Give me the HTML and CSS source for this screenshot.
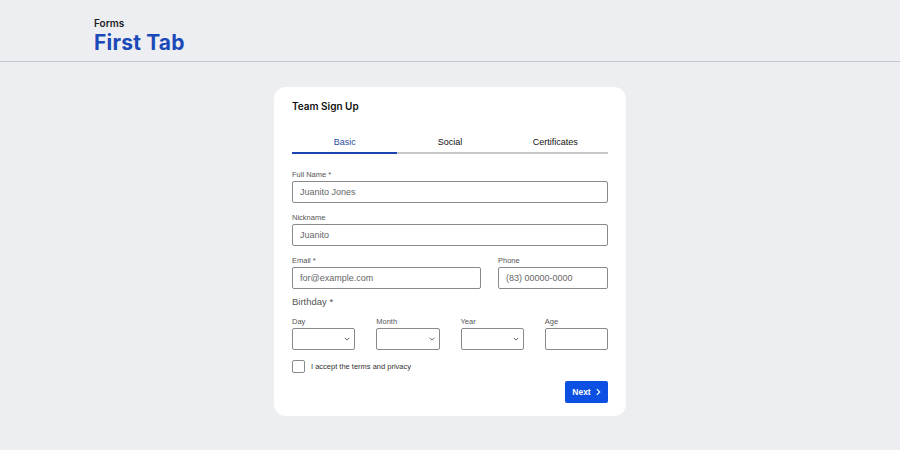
FILE: index.html
```html
<!DOCTYPE html>
<html>
<head>
<meta charset="utf-8">
<link rel="stylesheet" href="styles.css">
</head>
<body>
<header class="page-header">
  <div class="crumb">Forms</div>
  <h1 class="page-title">First Tab</h1>
</header>
<main class="main">
  <section class="card">
    <h2 class="card-title">Team Sign Up</h2>
    <nav class="tabs">
      <div class="tab active">Basic</div>
      <div class="tab">Social</div>
      <div class="tab">Certificates</div>
    </nav>
    <div class="field">
      <label class="label">Full Name *</label>
      <input class="input" placeholder="Juanito Jones">
    </div>
    <div class="field">
      <label class="label">Nickname</label>
      <input class="input" placeholder="Juanito">
    </div>
    <div class="row-2">
      <div class="field">
        <label class="label">Email *</label>
        <input class="input" placeholder="for@example.com">
      </div>
      <div class="field">
        <label class="label">Phone</label>
        <input class="input" placeholder="(83) 00000-0000">
      </div>
    </div>
    <div class="section-label">Birthday *</div>
    <div class="row-4">
      <div class="field">
        <label class="label">Day</label>
        <div class="select"><svg class="chev" viewBox="0 0 8 5" width="6" height="4"><path d="M1 1l3 3 3-3" fill="none" stroke="#555" stroke-width="1.2"/></svg></div>
      </div>
      <div class="field">
        <label class="label">Month</label>
        <div class="select"><svg class="chev" viewBox="0 0 8 5" width="6" height="4"><path d="M1 1l3 3 3-3" fill="none" stroke="#555" stroke-width="1.2"/></svg></div>
      </div>
      <div class="field">
        <label class="label">Year</label>
        <div class="select"><svg class="chev" viewBox="0 0 8 5" width="6" height="4"><path d="M1 1l3 3 3-3" fill="none" stroke="#555" stroke-width="1.2"/></svg></div>
      </div>
      <div class="field">
        <label class="label">Age</label>
        <div class="select"></div>
      </div>
    </div>
    <div class="check-row">
      <span class="checkbox"></span>
      <span class="check-text">I accept the terms and privacy</span>
    </div>
    <div class="actions">
      <button class="btn">Next <svg viewBox="0 0 6 9" width="5" height="8"><path d="M1 1l3.5 3.5L1 8" fill="none" stroke="#fff" stroke-width="1.4"/></svg></button>
    </div>
  </section>
</main>
</body>
</html>
```

FILE: styles.css
```css
* { box-sizing: border-box; }
html, body { margin: 0; padding: 0; }
body {
  background: #eceef2;
  font-family: "Liberation Sans", Arial, sans-serif;
  color: #222;
  width: 900px;
  height: 450px;
  overflow: hidden;
}
.page-header {
  height: 62px;
  border-bottom: 1px solid #c4c6cb;
  padding: 17px 0 0 94px;
}
.crumb {
  font-family: Inter, sans-serif;
  font-size: 10px;
  font-weight: 600;
  color: #1d1d1f;
  line-height: 13px;
}
.page-title {
  margin: 0;
  font-family: Inter, sans-serif;
  font-size: 21px;
  font-weight: 700;
  letter-spacing: 0.2px;
  color: #1b49b8;
  line-height: 26px;
}
.main {
  display: flex;
  justify-content: center;
  padding-top: 25px;
}
.card {
  width: 352px;
  background: #fff;
  border-radius: 12px;
  padding: 12px 18px 13px;
}
.card-title {
  margin: 0;
  font-family: Inter, sans-serif;
  font-size: 10px;
  font-weight: 600;
  color: #111;
  line-height: 14px;
}
.tabs {
  display: flex;
  margin-top: 24px;
  border-bottom: 2px solid #c8c8c8;
  margin-bottom: 16px;
}
.tab {
  flex: 1;
  text-align: center;
  font-size: 9px;
  color: #111;
  padding-bottom: 5px;
  margin-bottom: -2px;
  border-bottom: 2px solid transparent;
}
.tab.active {
  color: #2b4ea0;
  border-bottom-color: #1b45b0;
}
.field {
  display: flex;
  flex-direction: column;
  margin-bottom: 10px;
}
.label {
  font-size: 7.5px;
  color: #555;
  line-height: 9px;
  margin-bottom: 2px;
}
.input {
  height: 22px;
  border: 1px solid #8a8a8a;
  border-radius: 2px;
  padding: 0 7px;
  font-family: "Liberation Sans", Arial, sans-serif;
  font-size: 9px;
  color: #333;
  width: 100%;
  outline: none;
}
.input::placeholder { color: #666; }
.row-2 {
  display: grid;
  grid-template-columns: 189px 1fr;
  column-gap: 17px;
}
.section-label {
  font-size: 9.5px;
  color: #555;
  line-height: 12px;
  margin-top: -3px;
  margin-bottom: 9px;
}
.row-4 {
  display: grid;
  grid-template-columns: repeat(4, 1fr);
  column-gap: 21px;
}
.select {
  height: 22px;
  border: 1px solid #8a8a8a;
  border-radius: 2px;
  display: flex;
  align-items: center;
  justify-content: flex-end;
  padding-right: 4px;
}
.check-row {
  display: flex;
  align-items: center;
  height: 13px;
}
.checkbox {
  width: 13px;
  height: 13px;
  border: 1px solid #8a8a8a;
  border-radius: 2px;
  margin-right: 6px;
}
.check-text {
  font-size: 7.5px;
  color: #333;
}
.actions {
  display: flex;
  justify-content: flex-end;
  margin-top: 8px;
}
.btn {
  height: 22px;
  width: 43px;
  border: none;
  border-radius: 2px;
  background: #0b4fe3;
  color: #fff;
  font-family: "Liberation Sans", Arial, sans-serif;
  font-size: 8.5px;
  font-weight: 700;
  display: flex;
  align-items: center;
  justify-content: center;
  gap: 5px;
  padding: 0;
}
```
